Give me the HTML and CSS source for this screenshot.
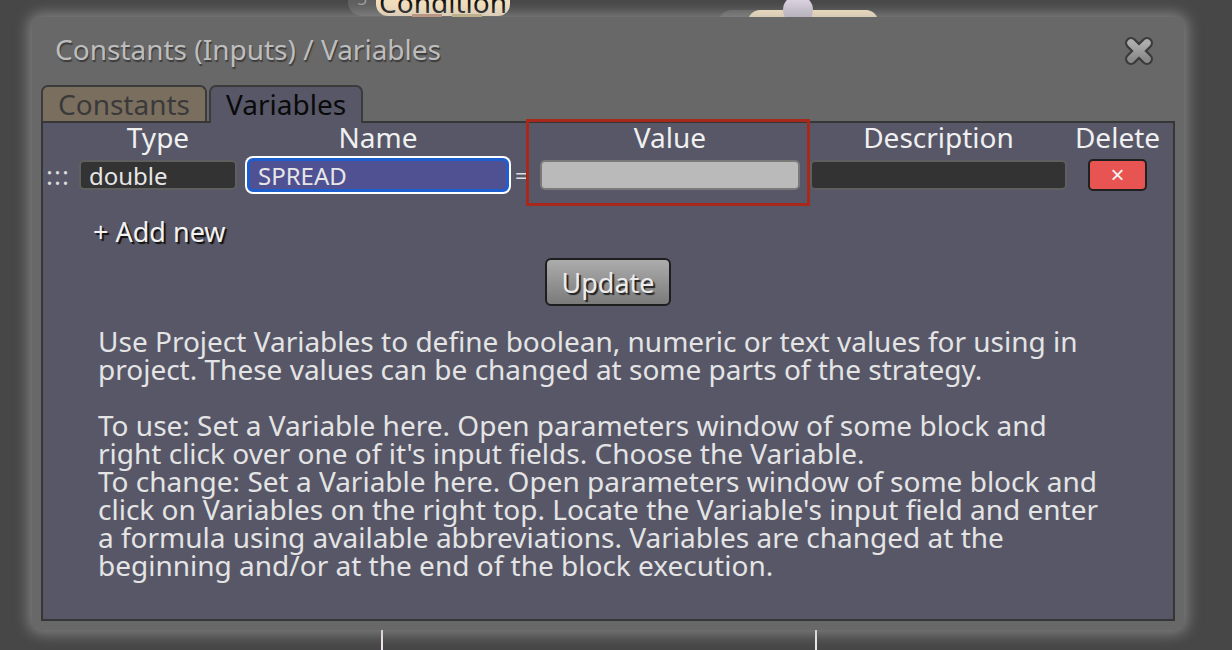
FILE: index.html
```html
<!DOCTYPE html>
<html>
<head>
    <title>Constants (Inputs) / Variables</title>
    <link rel="stylesheet" href="styles.css">
</head>
<body>
    <!-- strategy canvas behind the dialog -->
    <div class="canvas">
        <div class="node node-condition">
            <span class="node-num">5</span>
            <span class="node-pill">Condition</span>
            <span class="node-pin pin-a"></span>
            <span class="node-pin pin-b"></span>
        </div>
        <div class="node node-next">
            <span class="node-pill"></span>
            <span class="node-dot"></span>
        </div>
        <div class="wire wire-a"></div>
        <div class="wire wire-b"></div>
    </div>

    <div class="dialog">
        <div class="dialog-head">
            <h2>Constants (Inputs) / Variables</h2>
            <button type="button" class="close-btn" title="Close">
                <svg width="34" height="34" viewBox="0 0 34 34">
                    <defs>
                        <linearGradient id="xfill" x1="0" y1="0" x2="0" y2="1">
                            <stop offset="0" stop-color="#adadad"/>
                            <stop offset="1" stop-color="#8a8a8a"/>
                        </linearGradient>
                    </defs>
                    <path d="M9 9 L25 25 M25 9 L9 25" stroke="#3a3a3a" stroke-width="12" stroke-linecap="round"/>
                    <path d="M9 9 L25 25 M25 9 L9 25" stroke="url(#xfill)" stroke-width="7.5" stroke-linecap="round"/>
                </svg>
            </button>
        </div>

        <div class="tabs">
            <div class="tab">Constants</div>
            <div class="tab active">Variables</div>
        </div>

        <div class="panel">
            <div class="var-table">
                <div class="th c-type">Type</div>
                <div class="th c-name">Name</div>
                <div class="th c-value">Value</div>
                <div class="th c-desc">Description</div>
                <div class="th c-del">Delete</div>

                <div class="handle">:::</div>
                <input class="field c-type" type="text" value="double">
                <input class="field name-field c-name" type="text" value="SPREAD">
                <div class="eq">=</div>
                <input class="field value-field c-value" type="text" value="">
                <input class="field c-desc" type="text" value="">
                <button type="button" class="del-btn c-del">&times;</button>

                <div class="highlight"></div>
            </div>

            <div class="add-new">+ Add new</div>

            <div class="actions">
                <button type="button" class="update-btn">Update</button>
            </div>

            <div class="help">
                <p>Use Project Variables to define boolean, numeric or text values for using in<br>
                project. These values can be changed at some parts of the strategy.</p>
                <p>To use: Set a Variable here. Open parameters window of some block and<br>
                right click over one of it's input fields. Choose the Variable.<br>
                To change: Set a Variable here. Open parameters window of some block and<br>
                click on Variables on the right top. Locate the Variable's input field and enter<br>
                a formula using available abbreviations. Variables are changed at the<br>
                beginning and/or at the end of the block execution.</p>
            </div>
        </div>
    </div>
</body>
</html>
```

FILE: styles.css
```css
body {
    margin: 0;
    width: 1232px;
    height: 650px;
    overflow: hidden;
    background: #474747;
    font-family: "Noto Sans", "Open Sans", sans-serif;
    position: relative;
}

/* canvas nodes */
.canvas {
    position: absolute;
    inset: 0;
}
.node {
    position: absolute;
}
.node-condition {
    left: 348px;
    top: -30px;
    width: 162px;
    height: 46px;
    background: #5e5e5e;
    border-radius: 14px;
}
.node-num {
    position: absolute;
    left: 9px;
    top: 16px;
    color: #999;
    font-size: 18px;
}
.node-pill {
    position: absolute;
    left: 28px;
    top: 0;
    width: 134px;
    height: 46px;
    background: #f3dfbd;
    border-radius: 12px;
    color: #111;
    font-size: 28px;
    line-height: 64px;
    text-align: center;
    overflow: hidden;
}
.node-pin {
    position: absolute;
    top: 44px;
    width: 30px;
    height: 4px;
}
.pin-a { left: 64px; background: #c08a6c; }
.pin-b { left: 104px; background: #c9b27a; }
.node-next {
    left: 718px;
    top: 10px;
    width: 160px;
    height: 40px;
    background: #5e5e5e;
    border-radius: 14px;
}
.node-next .node-pill {
    left: 30px;
    width: 130px;
}
.node-dot {
    position: absolute;
    left: 65px;
    top: -15px;
    width: 30px;
    height: 30px;
    border-radius: 50%;
    background: linear-gradient(#e2dbe6, #b3a9bb);
}
.wire {
    position: absolute;
    top: 620px;
    width: 2px;
    height: 40px;
    background: #eee6ee;
}
.wire-a { left: 381px; }
.wire-b { left: 815px; }

/* dialog */
.dialog {
    position: absolute;
    left: 32px;
    top: 17px;
    width: 1152px;
    height: 613px;
    box-sizing: border-box;
    padding: 0 9px 9px;
    background: #686868;
    border-radius: 10px;
    box-shadow: 0 0 14px 4px rgba(175, 175, 175, 0.55);
    display: flex;
    flex-direction: column;
    z-index: 2;
}
.dialog-head {
    height: 68px;
    display: flex;
    align-items: center;
    justify-content: space-between;
    padding: 0 19px 0 14px;
}
.dialog-head h2 {
    margin: 0 0 4px;
    font-size: 28px;
    font-weight: normal;
    color: #bdbdbd;
    text-shadow: 1px 2px 1px #3c3c3c;
}
.close-btn {
    border: none;
    background: none;
    padding: 0;
    width: 34px;
    height: 34px;
    cursor: pointer;
}

.tabs {
    display: flex;
    gap: 2px;
    height: 36px;
}
.tab {
    box-sizing: border-box;
    height: 36px;
    padding: 0 15px;
    border: 2px solid #3b3b3b;
    border-bottom: none;
    border-radius: 7px 7px 0 0;
    background: #7a6e5f;
    color: #3a3a3a;
    font-size: 28px;
    line-height: 34px;
}
.tab.active {
    height: 38px;
    position: relative;
    z-index: 1;
    background: #575768;
    color: #0a0a0a;
}

.panel {
    flex: 1;
    background: #575768;
    border: 2px solid #363636;
    color: #eee;
}

/* variables table */
.var-table {
    position: relative;
    display: grid;
    grid-template-columns: 36px 158px 10px 262px 31px 260px 10px 257px 21px 59px;
    grid-template-rows: 28px 48px;
    align-items: center;
}
.th {
    justify-self: center;
    font-size: 28px;
    line-height: 28px;
    color: #f0f0f0;
    white-space: nowrap;
}
.c-type { grid-column: 2; }
.c-name { grid-column: 4; }
.c-value { grid-column: 6; }
.c-desc { grid-column: 8; }
.c-del { grid-column: 10; }
.handle {
    grid-column: 1;
    padding-left: 3px;
    font-size: 26px;
    line-height: 26px;
    color: #dcdcdc;
    letter-spacing: 1px;
}
.field {
    box-sizing: border-box;
    width: 100%;
    height: 30px;
    padding: 0 8px;
    border: 2px solid #5f5f5f;
    border-radius: 5px;
    background: #333;
    color: #e6e6e6;
    font-family: "Noto Sans", "Open Sans", sans-serif;
    font-size: 24px;
}
.name-field {
    height: 34px;
    border: 3px solid #1d5fcf;
    border-radius: 6px;
    background: #4f5193;
    box-shadow: 0 0 0 2px #fff;
    padding: 0 8px;
}
.value-field {
    background: #bababa;
    border-color: #7a7a7a;
}
.eq {
    grid-column: 5;
    font-size: 22px;
    color: #ddd;
    padding-left: 6px;
}
.del-btn {
    height: 32px;
    border: 2px solid #202020;
    border-radius: 5px;
    background: #e85451;
    color: #f4f4f4;
    font-size: 24px;
    line-height: 24px;
    padding: 0;
}
.highlight {
    position: absolute;
    left: 483px;
    top: -4px;
    width: 284px;
    height: 87px;
    box-sizing: border-box;
    border: 3px solid #a8291c;
}

.add-new {
    margin: 15px 0 0 50px;
    font-size: 27px;
    line-height: 36px;
    color: #f2f2f2;
    text-shadow: 2px 2px 1px #111;
}
.actions {
    display: flex;
    justify-content: center;
    margin-top: 8px;
}
.update-btn {
    width: 126px;
    height: 48px;
    border: 2px solid #1e1e1e;
    border-radius: 6px;
    background: linear-gradient(#acacac, #7b7b7b);
    color: #ececec;
    font-family: "Noto Sans", "Open Sans", sans-serif;
    font-size: 27px;
    text-shadow: 2px 2px 1px #222;
    cursor: pointer;
}

.help {
    margin: 21px 0 0 55px;
    font-size: 28px;
    line-height: 28px;
    color: #e4e4e4;
}
.help p {
    margin: 0 0 28px;
}
```
